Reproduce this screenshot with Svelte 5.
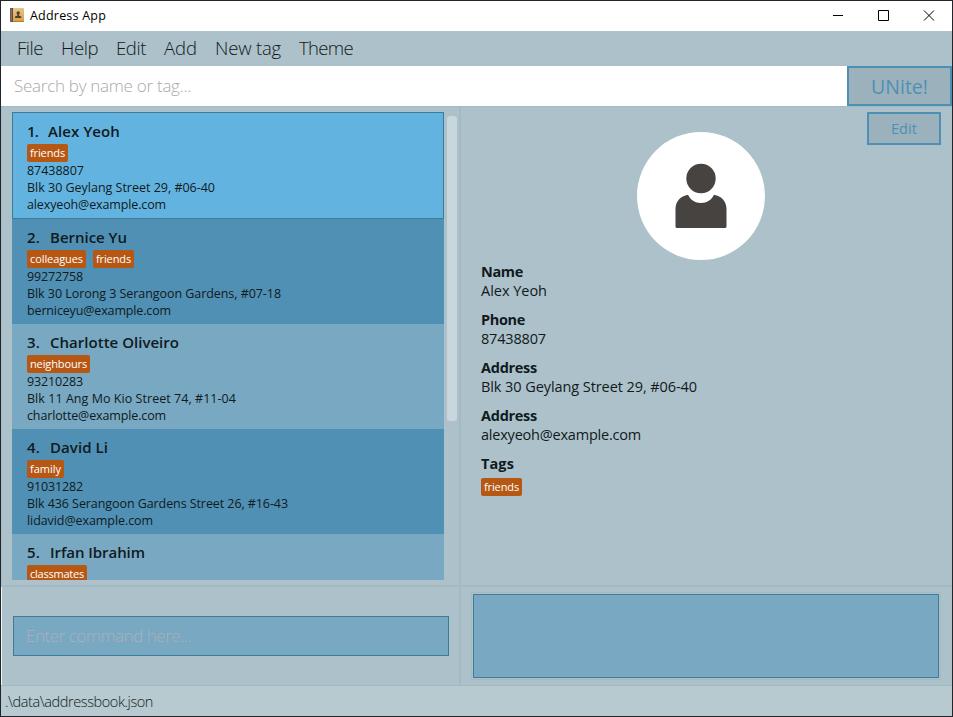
<script>
  const menus = [['File', 26, 18], ['Help', 37, 18], ['Edit', 30, 18], ['Add', 33, 18], ['New tag', 66, 18], ['Theme', 54, 0]];
  const people = [
    { name: 'Alex Yeoh', nw: 72, nx: 21, tags: [['friends', 35]], lines: [['87438807', 57], ['Blk 30 Geylang Street 29, #06-40', 188], ['alexyeoh@example.com', 139]] },
    { name: 'Bernice Yu', nw: 77, nx: 23, tags: [['colleagues', 53], ['friends', 35]], lines: [['99272758', 56], ['Blk 30 Lorong 3 Serangoon Gardens, #07-18', 254], ['berniceyu@example.com', 144]] },
    { name: 'Charlotte Oliveiro', nw: 129, nx: 23, tags: [['neighbours', 57]], lines: [['93210283', 56], ['Blk 11 Ang Mo Kio Street 74, #11-04', 209], ['charlotte@example.com', 139]] },
    { name: 'David Li', nw: 58, nx: 23, tags: [['family', 31]], lines: [['91031282', 56], ['Blk 436 Serangoon Gardens Street 26, #16-43', 261], ['lidavid@example.com', 126]] },
    { name: 'Irfan Ibrahim', nw: 95, nx: 23, tags: [['classmates', 54]], lines: [] }
  ];
  const details = [
    ['Name', 42, 'Alex Yeoh', 66],
    ['Phone', 44, '87438807', 65],
    ['Address', 56, 'Blk 30 Geylang Street 29, #06-40', 216],
    ['Address', 56, 'alexyeoh@example.com', 160]
  ];

  // Spreads the tracking so that a label takes up the given width.
  function fit(node, width) {
    node.style.letterSpacing = '0px';
    const natural = node.getBoundingClientRect().width;
    node.style.letterSpacing = (width - natural) / node.textContent.length + 'px';
  }
</script>

{#snippet label(text, width)}<span class="t" use:fit={width}>{text}</span>{/snippet}

<div class="window">
  <header class="title">
    <svg class="book" width="14" height="14" viewBox="0 0 14 14">
      <defs><linearGradient id="g" x2="0" y2="1"><stop stop-color="#e6c48a" /><stop offset="1" stop-color="#d8a040" /></linearGradient></defs>
      <rect width="14" height="14" rx="1" fill="url(#g)" />
      <path d="M0 1Q0 0 1 0H3V14H1Q0 14 0 13Z" fill="#5d4c42" />
      <path d="M1.2 1V13" stroke="#948579" />
      <path d="M3 13.5H14" stroke="#b47b33" />
      <circle cx="8.2" cy="5" r="1.7" fill="#55402c" /><path d="M7.5 6h1.5v1.600l2.300 1V10H5V8.600l2.500-1Z" fill="#55402c" />
    </svg>
    {@render label('Address App', 76)}
    <svg class="controls" width="104" height="12" viewBox="0 0 104 12" fill="none" stroke="#000">
      <path d="M0 6.500H10M45.500 1.500h10v10h-10ZM91 1.500l10 10M101 1.500l-10 10" />
    </svg>
  </header>

  <nav>
    {#each menus as [text, width, gap]}
      <span class="item" style:margin-right="{gap}px">{@render label(text, width)}</span>
    {/each}
  </nav>

  <div class="search">
    <div class="query">{@render label('Search by name or tag...', 177)}</div>
    <button class="unite">{@render label('UNite!', 57)}</button>
  </div>

  <div class="main">
    <section class="left">
      <div class="list">
        {#each people as p, i}
          <article class:selected={i === 0} class:dark={i % 2 === 1}>
            <div class="name">
              <span class="num" style:width="{p.nx}px">{@render label(i + 1 + '.', i ? 13 : 11)}</span>{@render label(p.name, p.nw)}
            </div>
            <div class="tags">
              {#each p.tags as [tag, w]}<span class="tag">{@render label(tag, w)}</span>{/each}
            </div>
            {#each p.lines as [line, w]}<div class="line">{@render label(line, w)}</div>{/each}
          </article>
        {/each}
      </div>
      <div class="thumb"></div>
    </section>
    <section class="right">
      <button class="edit">{@render label('Edit', 26)}</button>
      <svg class="avatar" width="128" height="128" viewBox="0 0 128 128">
        <circle cx="64" cy="64" r="64" fill="#fff" />
        <g fill="#474340"><circle cx="64" cy="46.500" r="14.700" />
          <path d="M51 62.800C53.500 68 58 71 64 71S74.500 68 77 62.800C84.500 64 89.500 69.500 89.500 77V94.500Q89.500 96 88 96H40Q38.500 96 38.500 94.500V77C38.500 69.500 43.500 64 51 62.800Z" /></g>
      </svg>
      <div class="details">
        {#each details as [head, hw, value, vw]}
          <div class="field"><b>{@render label(head, hw)}</b><div>{@render label(value, vw)}</div></div>
        {/each}
        <b>{@render label('Tags', 33)}</b>
        <div class="tags"><span class="tag">{@render label('friends', 35)}</span></div>
      </div>
    </section>
  </div>

  <div class="bottom">
    <div class="command"><div class="input">{@render label('Enter command here...', 165)}</div></div>
    <div class="result"><div></div></div>
  </div>
  <footer>{@render label('.\\data\\addressbook.json', 148)}</footer>
</div>

<style>
  :global(body) { background: #23262c; }
  .window, .window * { box-sizing: border-box; }
  .window { width: 953px; height: 717px; border: 1px solid #23252c; background: #adc1ca; display: flex; flex-direction: column; font-family: "Open Sans", "Noto Sans", sans-serif; color: #101a20; overflow: hidden; }
  .t { display: inline-block; white-space: pre; }
  button { font-family: inherit; padding: 0; margin: 0; background: #9bb2bd; border: 2px solid #4e90b4; color: #4e90b4; }
  .title { height: 30px; flex: none; background: #fff; display: flex; align-items: center; padding: 0 15px 2px 9px; font-size: 12.500px; color: #000; }
  .book { margin-right: 6px; }
  .controls { margin-left: auto; }
  nav { height: 35px; flex: none; display: flex; align-items: center; padding: 0 0 2px 16px; font-size: 18.500px; font-weight: 300; }
  .search { height: 40px; flex: none; display: flex; }
  .query { flex: 1; background: #fff; color: #a9a9a9; font-size: 17px; font-weight: 300; line-height: 40px; padding-left: 13px; }
  .unite { width: 105px; font-size: 19.500px; }
  .main { height: 479px; flex: none; display: flex; border-top: 1px solid #a3bac2; }
  .left { width: 458px; flex: none; border-left: 1px solid #a7bcc5; display: flex; padding: 5px 0 0 10px; }
  .list { width: 432px; height: 468px; overflow: hidden; }
  article { height: 105px; padding: 8px 15px 0; background: #78a8c2; }
  article.dark { background: #5090b4; }
  article.selected { height: 107px; background: #63b3e1; border: 1px solid #3e7b99; padding: 8px 14px 0; }
  .name { height: 23px; line-height: 20px; font-size: 15px; font-weight: 600; display: flex; }
  .num { flex: none; }
  .tags { display: flex; gap: 7px; height: 18px; }
  .tag { height: 18px; border-radius: 2px; background: #b65814; color: #fff; font-size: 11px; line-height: 18px; padding: 0 3px; }
  .line { height: 17px; line-height: 17px; font-size: 12.500px; }
  .thumb { width: 10px; height: 305px; margin: 4px 0 0 3px; border-radius: 3px; background: #c8d7dd; }
  .right { flex: 1; border-left: 2px solid #a3bac2; display: flex; flex-direction: column; position: relative; }
  .edit { width: 74px; height: 33px; position: absolute; right: 11px; top: 5px; font-size: 14.500px; }
  .avatar { margin: 25px 0 0 176px; flex: none; }
  .details { padding: 2px 0 0 20px; font-size: 14.500px; line-height: 19px; }
  .field { height: 48px; }
  b { display: block; height: 19px; font-weight: 700; }
  .details .tags { margin-top: 5px; }
  .bottom { height: 101px; flex: none; display: flex; border-top: 2px solid #a3bac2; border-bottom: 1px solid #a3bac2; }
  .command { width: 458px; flex: none; border-left: 1px solid #f4f7f8; padding: 29px 0 0 11px; }
  .input { width: 436px; height: 40px; border: 1px solid #3e7b99; background: #78a8c2; color: #aeb0b4; font-size: 17px; font-weight: 300; line-height: 38px; padding-left: 12px; }
  .result { flex: 1; border-left: 2px solid #a3bac2; padding: 7px 13px 7px 12px; }
  .result div { height: 84px; border: 1px solid #3e7b99; background: #78a8c2; outline: 1px solid #a3bac2; outline-offset: 1px; }
  footer { flex: 1; background: #b6cacf; padding-left: 4px; font-size: 14.500px; font-weight: 300; line-height: 31px; }
</style>
